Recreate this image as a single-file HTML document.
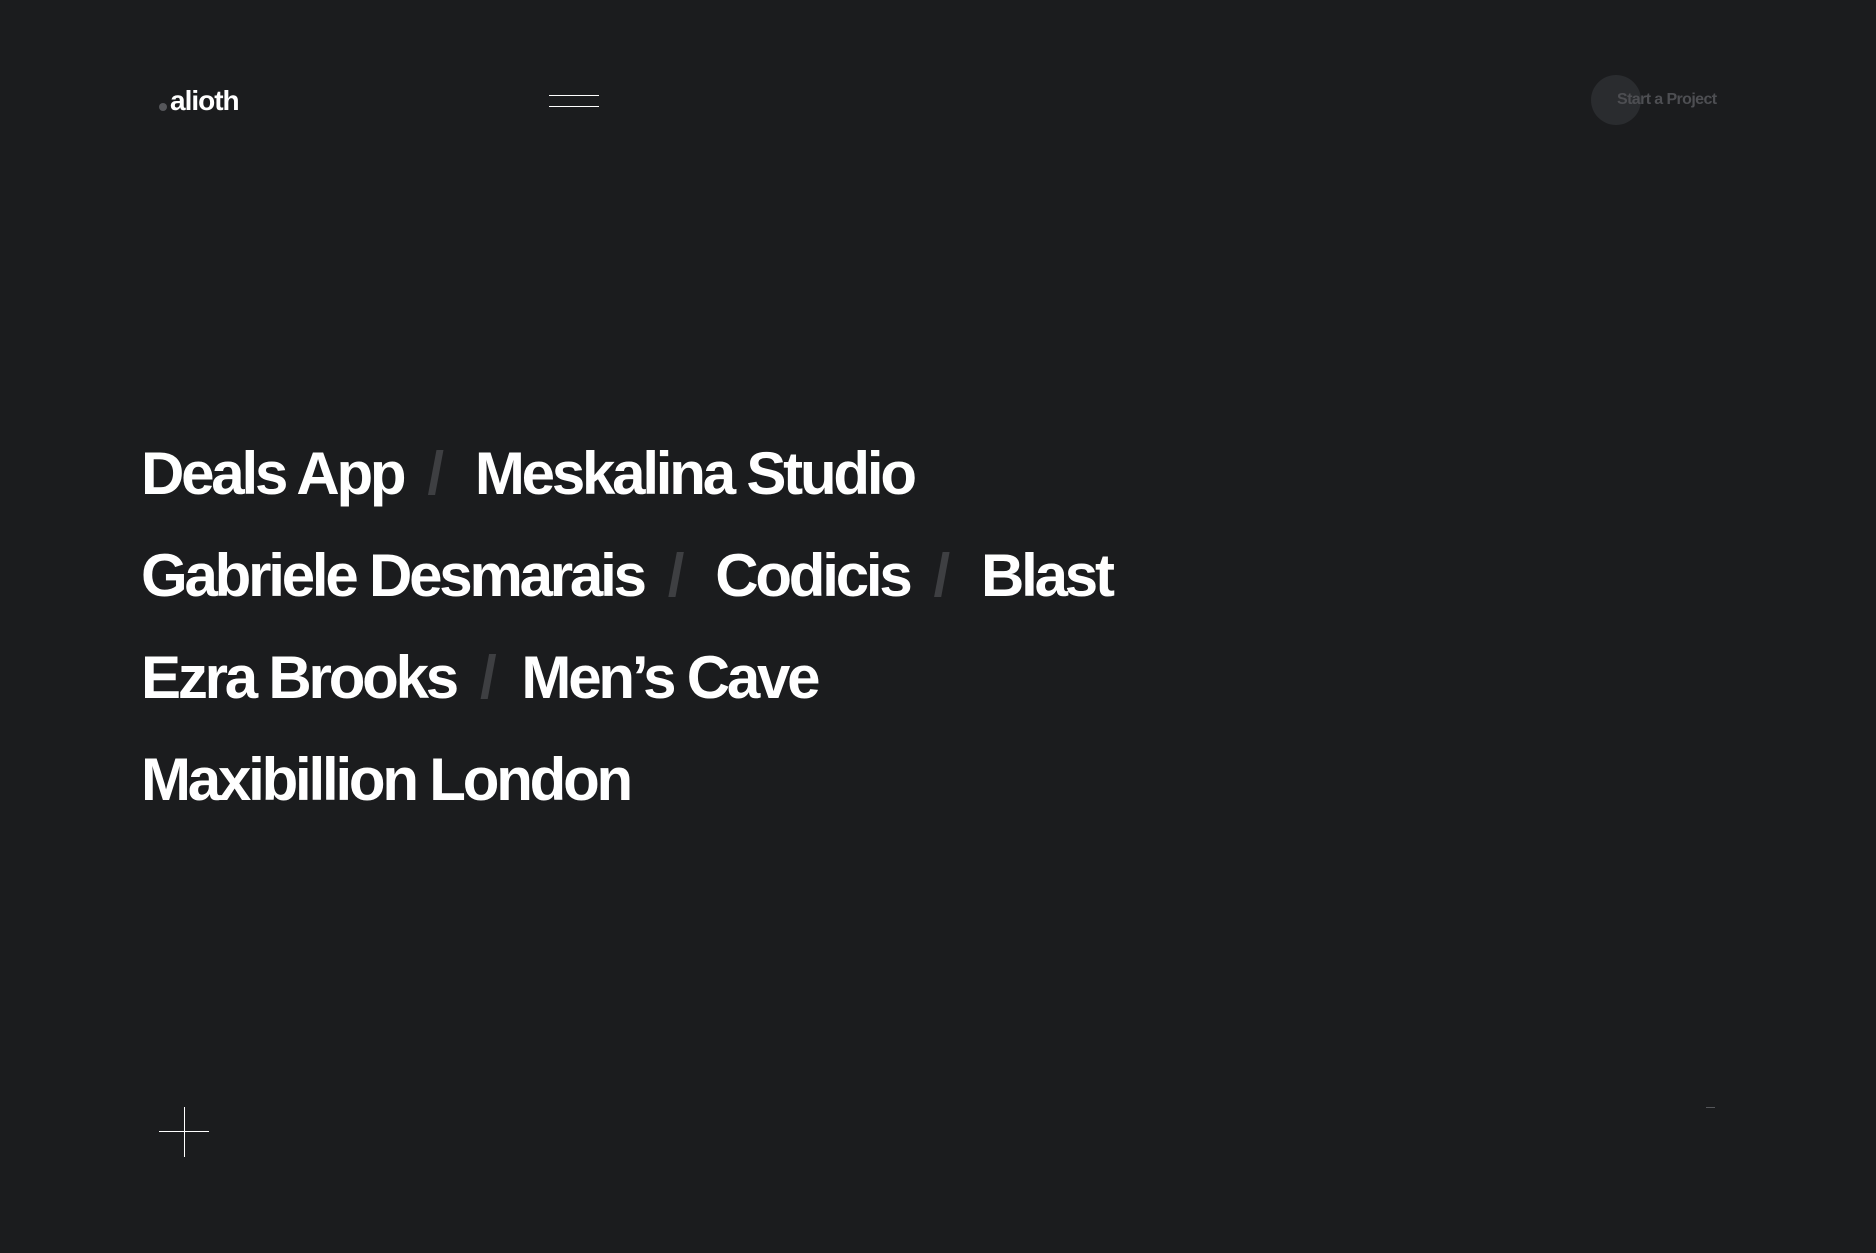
<!DOCTYPE html>
<html><head><meta charset="utf-8"><style>
html,body{margin:0;padding:0;background:#1b1c1e;width:1876px;height:1253px;overflow:hidden;font-family:"Liberation Sans",Arial,sans-serif}
.abs{position:absolute}
.logo{left:170px;top:87px;font-size:28px;font-weight:bold;color:#fff;letter-spacing:-1px;line-height:1}
.dot{left:159px;top:103px;width:8px;height:8px;border-radius:50%;background:#55565a}
.hl{left:549px;width:50px;height:1px;background:#fff}
.circ{left:1591px;top:75px;width:50px;height:50px;border-radius:50%;background:#2a2c2f}
.cta{left:1617px;top:92px;font-size:16px;font-weight:bold;color:#4d4e52;letter-spacing:-0.6px;line-height:1}
.line{left:141px;font-size:60px;font-weight:bold;color:#fff;letter-spacing:-3.2px;line-height:1;white-space:nowrap}
.sl{color:#3e3f42;margin:0 34px 0 24px}
</style></head><body>
<div class="abs dot"></div>
<div class="abs logo">alioth</div>
<div class="abs hl" style="top:95px"></div>
<div class="abs hl" style="top:106px"></div>
<div class="abs circ"></div>
<div class="abs cta">Start a Project</div>
<div class="abs line" style="top:444px">Deals App<span class="sl">/</span>Meskalina Studio</div>
<div class="abs line" style="top:546px">Gabriele Desmarais<span class="sl">/</span>Codicis<span class="sl">/</span>Blast</div>
<div class="abs line" style="top:648px">Ezra Brooks<span class="sl" style="margin-right:28px">/</span>Men’s Cave</div>
<div class="abs line" style="top:750px">Maxibillion London</div>
<div class="abs" style="left:159px;top:1131px;width:50px;height:1px;background:#fff"></div>
<div class="abs" style="left:184px;top:1107px;width:1px;height:50px;background:#fff"></div>
<div class="abs" style="left:1706px;top:1107px;width:9px;height:1px;background:#55565a"></div>
</body></html>
